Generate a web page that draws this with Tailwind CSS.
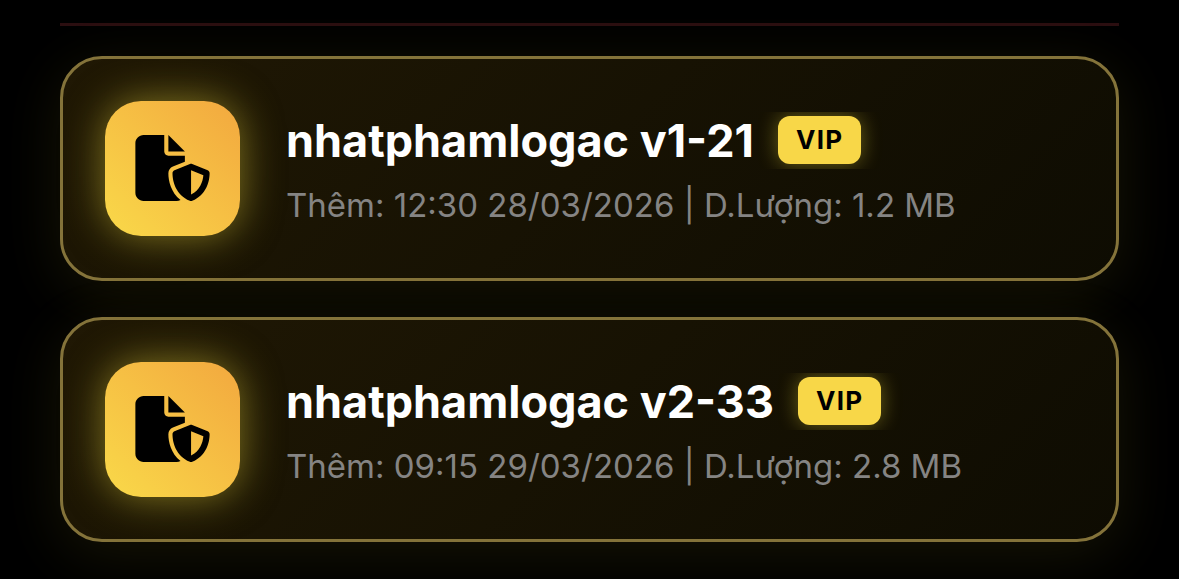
<!DOCTYPE html>
<html lang="vi">
<head>
<meta charset="utf-8">
<meta name="viewport" content="width=device-width, initial-scale=1">
<title>nhatphamlogac</title>
<script src="https://cdn.jsdelivr.net/npm/@tailwindcss/browser@4"></script>
</head>
<body class="bg-black font-['Inter','Noto_Sans',sans-serif]">
<svg class="hidden" aria-hidden="true">
  <symbol id="file-shield" viewBox="0 0 576 512"><path d="M0 64C0 28.7 28.7 0 64 0L224 0l0 128c0 17.7 14.3 32 32 32l128 0 0 47-92.8 37.1c-21.3 8.5-35.2 29.1-35.2 52c0 56.6 18.9 148 94.2 208.3c-9 4.8-19.3 7.6-30.2 7.6L64 512c-35.3 0-64-28.7-64-64L0 64zm384 64l-128 0L256 0 384 128zm39.1 97.7c5.7-2.3 12.1-2.3 17.8 0l120 48C570 277.4 576 286.2 576 296c0 63.3-25.9 168.8-134.8 214.2c-5.9 2.5-12.6 2.5-18.5 0C313.9 464.8 288 359.3 288 296c0-9.8 6-18.6 15.1-22.3l120-48zM527.4 312L432 273.8l0 187.8c68.2-33 91.5-99 95.4-149.7z"/></symbol>
</svg>
<main class="overflow-hidden px-[60px] pt-[23px] pb-[37px]">
  <hr class="mb-[30px] border-t-3 border-[#2b0e10]">
  <ul class="flex flex-col gap-9">
    <li class="flex items-start gap-[46px] rounded-[42px] border-3 border-[#84733a] bg-linear-135 from-[#201804] to-[#0e0c02] p-[42px] shadow-[0_12px_60px_#e6d2301a]">
      <div class="flex size-[135px] shrink-0 items-center justify-center rounded-[36px] bg-linear-45 from-[#f9d949] to-[#f2a83f] pb-px shadow-[0_0_40px_#f0dc3c80]">
        <svg class="h-[66px] w-[75px]" aria-hidden="true"><use href="#file-shield"/></svg>
      </div>
      <div class="min-w-0 pt-[11px]">
        <div class="flex items-center gap-6 overflow-hidden pr-6">
          <h2 class="text-[45px] leading-[57px] font-bold text-white">nhatphamlogac v1-21</h2>
          <span class="mb-px rounded-xl bg-[#f8d748] px-[18px] text-[26px] leading-[48px] font-bold tracking-wider text-black shadow-[0_0_20px_#f0dc3c66]">VIP</span>
        </div>
        <p class="mt-4 text-[33px] leading-10 text-[#858483]">Thêm: 12:30 28/03/2026 | D.Lượng: 1.2 MB</p>
      </div>
    </li>
    <li class="flex items-start gap-[46px] rounded-[42px] border-3 border-[#84733a] bg-linear-135 from-[#201804] to-[#0e0c02] p-[42px] shadow-[0_12px_60px_#e6d2301a]">
      <div class="flex size-[135px] shrink-0 items-center justify-center rounded-[36px] bg-linear-45 from-[#f9d949] to-[#f2a83f] pb-px shadow-[0_0_40px_#f0dc3c80]">
        <svg class="h-[66px] w-[75px]" aria-hidden="true"><use href="#file-shield"/></svg>
      </div>
      <div class="min-w-0 pt-[11px]">
        <div class="flex items-center gap-6 overflow-hidden pr-6">
          <h2 class="text-[45px] leading-[57px] font-bold text-white">nhatphamlogac v2-33</h2>
          <span class="mb-px rounded-xl bg-[#f8d748] px-[18px] text-[26px] leading-[48px] font-bold tracking-wider text-black shadow-[0_0_20px_#f0dc3c66]">VIP</span>
        </div>
        <p class="mt-4 text-[33px] leading-10 text-[#858483]">Thêm: 09:15 29/03/2026 | D.Lượng: 2.8 MB</p>
      </div>
    </li>
  </ul>
</main>
</body>
</html>
